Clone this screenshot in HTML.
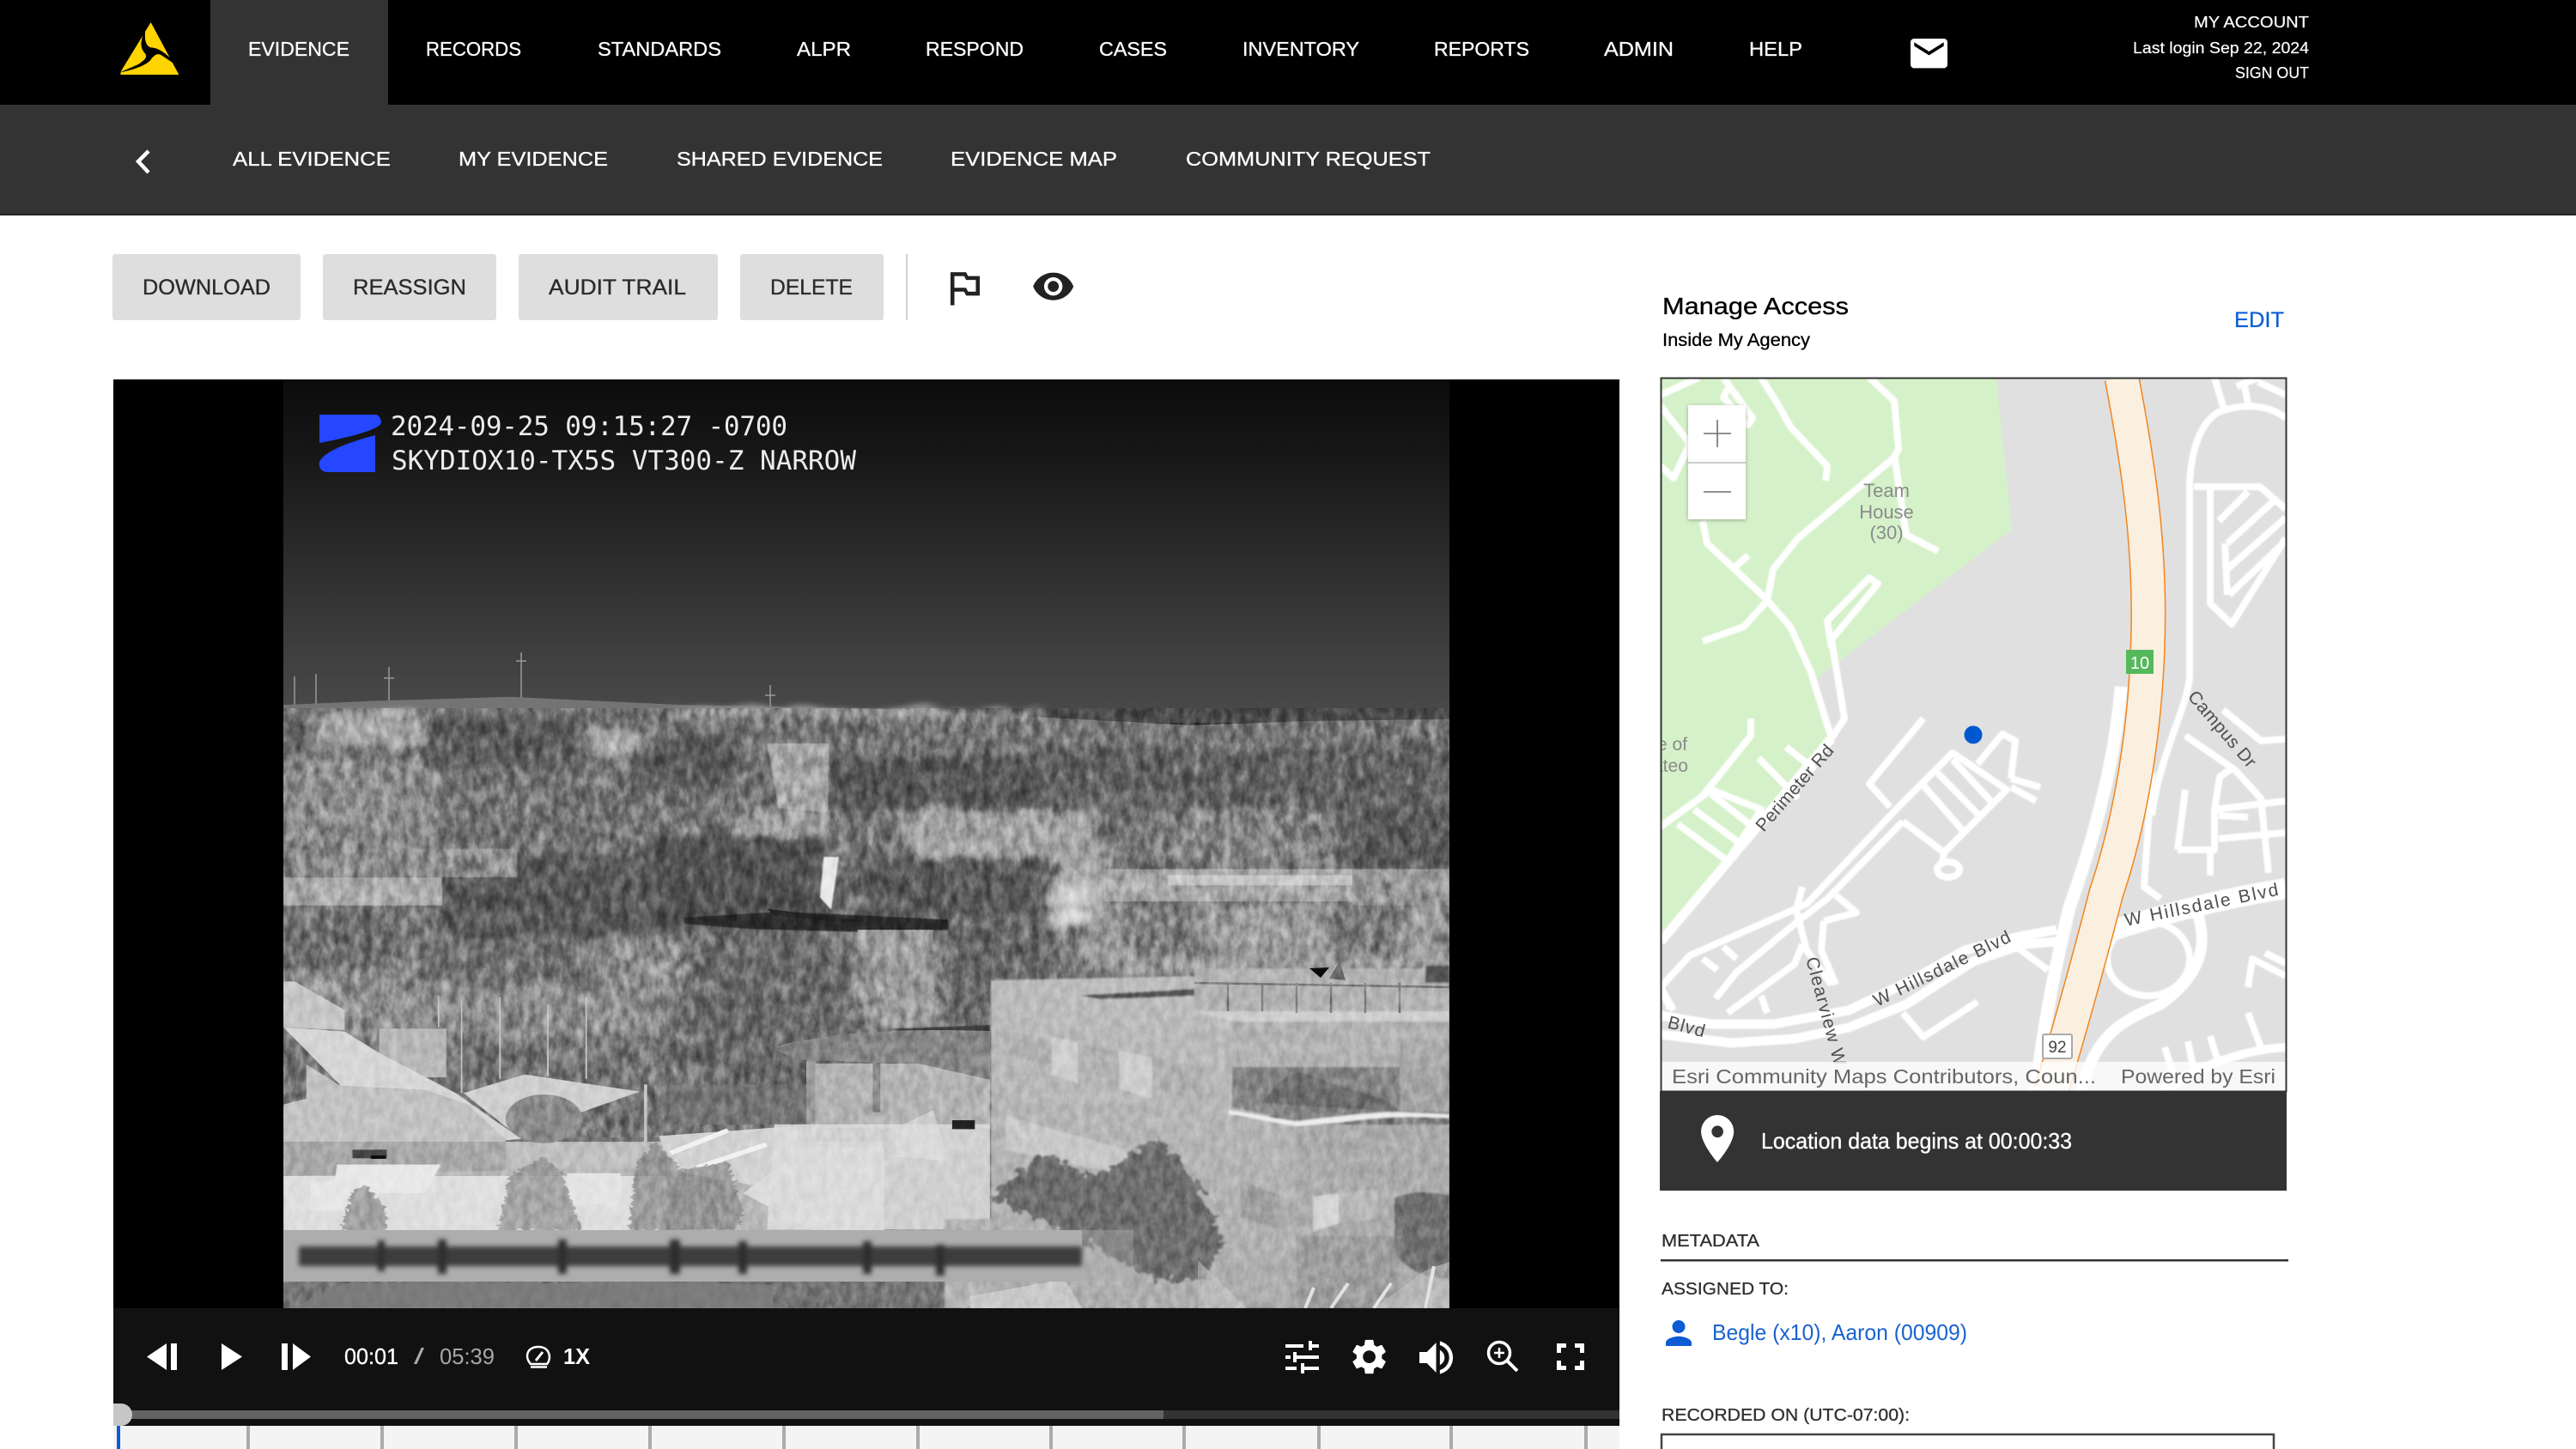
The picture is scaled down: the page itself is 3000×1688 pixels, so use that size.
<!DOCTYPE html>
<html lang="en">
<head>
<meta charset="utf-8">
<title>Evidence</title>
<style>
html,body{margin:0;padding:0;background:#fff;width:3000px;height:1688px;overflow:hidden}
svg{display:block}
text{font-family:"Liberation Sans",sans-serif}
.nav{font-size:23px;fill:#fff;stroke:#fff;stroke-width:.3}
.btn{font-size:25px;fill:#2b2b2b;stroke:#2b2b2b;stroke-width:.35}
.acc{font-size:18px;fill:#fff;stroke:#fff;stroke-width:.2}
.mono{font-family:"DejaVu Sans Mono","Liberation Mono",monospace;font-size:31px;fill:#ececec}
.r{fill:none;stroke:#fff;stroke-width:8;stroke-linejoin:round;stroke-linecap:butt}
.rw{fill:none;stroke:#fff;stroke-width:11;stroke-linejoin:round}
.lab{font-size:21px;fill:#4f4f4f}
.meta{font-size:20px;fill:#2f2f2f;stroke:#2f2f2f;stroke-width:.3}
</style>
</head>
<body>
<svg xmlns="http://www.w3.org/2000/svg" width="3000" height="1688" viewBox="0 0 3000 1688">
<defs>
<linearGradient id="sky" x1="0" y1="0" x2="0" y2="1">
<stop offset="0" stop-color="#0c0c0c"/><stop offset=".2" stop-color="#161616"/><stop offset=".5" stop-color="#2a2a2a"/><stop offset=".8" stop-color="#3f3f3f"/><stop offset="1" stop-color="#4b4b4b"/>
</linearGradient>
<linearGradient id="wall" x1="0" y1="0" x2="0" y2="1"><stop offset="0" stop-color="#bcbcbc"/><stop offset="1" stop-color="#adadad"/></linearGradient>
<filter id="j" x="-8%" y="-8%" width="116%" height="116%" color-interpolation-filters="sRGB">
<feTurbulence type="fractalNoise" baseFrequency=".03 .025" numOctaves="3" seed="4" result="t"/>
<feDisplacementMap in="SourceGraphic" in2="t" scale="50" xChannelSelector="R" yChannelSelector="G"/>
<feGaussianBlur stdDeviation="9 6"/>
</filter>
<filter id="jt" x="-10%" y="-10%" width="120%" height="120%" color-interpolation-filters="sRGB">
<feTurbulence type="fractalNoise" baseFrequency=".09" numOctaves="3" seed="12" result="t"/>
<feDisplacementMap in="SourceGraphic" in2="t" scale="26" xChannelSelector="R" yChannelSelector="G"/>
<feGaussianBlur stdDeviation="1"/>
</filter>
<filter id="b" x="-10%" y="-20%" width="120%" height="140%"><feGaussianBlur stdDeviation="3"/></filter>
<filter id="b1" x="-5%" y="-5%" width="110%" height="110%"><feGaussianBlur stdDeviation="1"/></filter>
<filter id="m" x="-2%" y="-2%" width="104%" height="104%"><feGaussianBlur stdDeviation=".7"/></filter>
<filter id="n" x="0" y="0" width="100%" height="100%" color-interpolation-filters="sRGB">
<feTurbulence type="fractalNoise" baseFrequency=".11 .07" numOctaves="3" seed="9"/>
<feColorMatrix type="matrix" values="1.7 0 0 0 -.35 1.7 0 0 0 -.35 1.7 0 0 0 -.35 0 0 0 0 1"/>
</filter>
<filter id="n2" x="0" y="0" width="100%" height="100%" color-interpolation-filters="sRGB">
<feTurbulence type="fractalNoise" baseFrequency=".09 .05" numOctaves="3" seed="3"/>
<feColorMatrix type="matrix" values="1.8 0 0 0 -.4 1.8 0 0 0 -.4 1.8 0 0 0 -.4 0 0 0 0 1"/>
</filter>
<clipPath id="vc"><rect x="330" y="442" width="1358" height="1082"/></clipPath>
<clipPath id="mc"><rect x="1935" y="441" width="727" height="830"/></clipPath>
</defs>

<rect width="3000" height="1688" fill="#fff"/>

<!-- top nav -->
<rect width="3000" height="122" fill="#000"/>
<rect x="245" width="207" height="122" fill="#333"/>
<rect y="122" width="3000" height="128" fill="#333"/>
<rect y="249" width="3000" height="2" fill="#222"/>

<!-- logo -->
<g transform="translate(125 15) scale(.3333)">
<path d="M152 33 L250 216 L45 216 L47 205 Z" fill="#ffd400"/>
<path d="M134 50 C118 92 110 118 132 142 C142 156 128 166 108 180 L42 209 C92 198 130 186 150 166 C164 146 176 138 192 150 L246 186 C216 150 186 126 160 122 C140 122 126 106 134 50 Z" fill="#000"/>
<path d="M40 216 H47 L44 205 Z" fill="#000"/>
</g>

<text class="nav" x="289" y="65" textLength="118" lengthAdjust="spacingAndGlyphs">EVIDENCE</text>
<text class="nav" x="496" y="65" textLength="111" lengthAdjust="spacingAndGlyphs">RECORDS</text>
<text class="nav" x="696" y="65" textLength="144" lengthAdjust="spacingAndGlyphs">STANDARDS</text>
<text class="nav" x="928" y="65" textLength="63" lengthAdjust="spacingAndGlyphs">ALPR</text>
<text class="nav" x="1078" y="65" textLength="114" lengthAdjust="spacingAndGlyphs">RESPOND</text>
<text class="nav" x="1280" y="65" textLength="79" lengthAdjust="spacingAndGlyphs">CASES</text>
<text class="nav" x="1447" y="65" textLength="136" lengthAdjust="spacingAndGlyphs">INVENTORY</text>
<text class="nav" x="1670" y="65" textLength="111" lengthAdjust="spacingAndGlyphs">REPORTS</text>
<text class="nav" x="1868" y="65" textLength="81" lengthAdjust="spacingAndGlyphs">ADMIN</text>
<text class="nav" x="2037" y="65" textLength="62" lengthAdjust="spacingAndGlyphs">HELP</text>

<path transform="translate(2220.7 36.4) scale(2.15)" fill="#fff" d="M20 4H4c-1.1 0-2 .9-2 2v12c0 1.1.9 2 2 2h16c1.1 0 2-.9 2-2V6c0-1.1-.9-2-2-2zm0 4l-8 5-8-5V6l8 5 8-5v2z"/>

<text class="acc" x="2555" y="32" textLength="134" lengthAdjust="spacingAndGlyphs">MY ACCOUNT</text>
<text class="acc" x="2484" y="62" textLength="205" lengthAdjust="spacingAndGlyphs">Last login Sep 22, 2024</text>
<text class="acc" x="2603" y="91" textLength="86" lengthAdjust="spacingAndGlyphs">SIGN OUT</text>

<!-- sub nav -->
<path d="M173 176 L161 188 L173 201" fill="none" stroke="#fff" stroke-width="4.5"/>
<text class="nav" x="271" y="193" textLength="184" lengthAdjust="spacingAndGlyphs">ALL EVIDENCE</text>
<text class="nav" x="534" y="193" textLength="174" lengthAdjust="spacingAndGlyphs">MY EVIDENCE</text>
<text class="nav" x="788" y="193" textLength="240" lengthAdjust="spacingAndGlyphs">SHARED EVIDENCE</text>
<text class="nav" x="1107" y="193" textLength="194" lengthAdjust="spacingAndGlyphs">EVIDENCE MAP</text>
<text class="nav" x="1381" y="193" textLength="285" lengthAdjust="spacingAndGlyphs">COMMUNITY REQUEST</text>

<!-- buttons -->
<rect x="131" y="296" width="219" height="77" rx="3" fill="#dedede"/>
<rect x="376" y="296" width="202" height="77" rx="3" fill="#dedede"/>
<rect x="604" y="296" width="232" height="77" rx="3" fill="#dedede"/>
<rect x="862" y="296" width="167" height="77" rx="3" fill="#dedede"/>
<text class="btn" x="166" y="343" textLength="149" lengthAdjust="spacingAndGlyphs">DOWNLOAD</text>
<text class="btn" x="411" y="343" textLength="132" lengthAdjust="spacingAndGlyphs">REASSIGN</text>
<text class="btn" x="639" y="343" textLength="160" lengthAdjust="spacingAndGlyphs">AUDIT TRAIL</text>
<text class="btn" x="897" y="343" textLength="96" lengthAdjust="spacingAndGlyphs">DELETE</text>
<rect x="1055" y="296" width="2" height="77" fill="#d0d0d0"/>
<path transform="translate(1095.6 308) scale(2.27)" fill="#222" d="M14 6l-1-2H5v17h2v-7h5l1 2h7V6h-6zm4 8h-4l-1-2H7V6h5l1 2h5v6z"/>
<path transform="translate(1201 308) scale(2.14)" fill="#222" d="M12 4.5C7 4.5 2.73 7.61 1 12c1.73 4.39 6 7.5 11 7.5s9.27-3.11 11-7.5c-1.73-4.39-6-7.5-11-7.5zM12 17c-2.76 0-5-2.24-5-5s2.24-5 5-5 5 2.24 5 5-2.24 5-5 5zm0-8c-1.66 0-3 1.34-3 3s1.34 3 3 3 3-1.34 3-3-1.34-3-3-3z"/>

<!-- video -->
<rect x="132" y="442" width="1754" height="1082" fill="#000"/>
<g clip-path="url(#vc)" style="isolation:isolate">
<rect x="330" y="442" width="1358" height="400" fill="url(#sky)"/>
<g stroke="#9a9a9a" stroke-width="1.5" fill="none">
<path d="M607 760V835M601 770H613M453 777V830M447 790H459M368 785V830M343 788V835M897 798V835M891 810H903"/>
</g>

<svg x="330" y="800" width="1358" height="724" viewBox="0 0 1543 1534" preserveAspectRatio="none">
<path d="M0 45 L120 35 L300 25 L530 45 L800 55 L1000 75 L1200 95 L1350 85 L1543 80 V1534 H0Z" fill="#747474"/>
<g filter="url(#j)">
<rect x="40" y="60" width="140" height="90" fill="#a4a4a4"/>
<rect x="390" y="110" width="100" height="60" fill="#aaa"/>
<rect x="520" y="50" width="480" height="30" fill="#8c8c8c"/>
<rect x="0" y="180" width="200" height="220" fill="#8b8b8b"/>
<rect x="600" y="300" width="130" height="120" fill="#9c9c9c"/>
<rect x="820" y="250" width="260" height="260" fill="#a2a2a2"/>
<rect x="1160" y="300" width="240" height="140" fill="#828282"/>
<rect x="190" y="70" width="210" height="130" fill="#5c5c5c"/>
<rect x="470" y="120" width="130" height="130" fill="#585858"/>
<rect x="720" y="170" width="290" height="130" fill="#565656"/>
<rect x="1000" y="150" width="543" height="150" fill="#626262"/>
<rect x="1400" y="300" width="143" height="150" fill="#5a5a5a"/>
<rect x="0" y="90" width="40" height="90" fill="#636363"/>
<rect x="210" y="410" width="260" height="210" fill="#595959"/>
<rect x="480" y="370" width="240" height="230" fill="#525252"/>
<rect x="760" y="420" width="250" height="160" fill="#595959"/>
<rect x="1020" y="480" width="60" height="110" fill="#cfcfcf"/>
</g>
<path d="M640 140 H722 L720 310 L655 300Z" fill="#b4b4b4" filter="url(#b1)" opacity=".75"/>
<rect x="0" y="470" width="210" height="70" fill="#aaa" filter="url(#b1)"/>
<path d="M10 400 H310 V470 H10Z" fill="#8a8a8a" filter="url(#b1)"/>
<path d="M715 420 L735 420 L725 550 L710 520Z" fill="#e8e8e8" filter="url(#b1)"/>
<rect x="1085" y="450" width="330" height="80" fill="#a6a6a6" filter="url(#b1)"/>
<rect x="1170" y="465" width="245" height="25" fill="#c8c8c8" filter="url(#b1)"/>
<rect x="1415" y="450" width="128" height="90" fill="#979797" filter="url(#b1)"/>
<g filter="url(#j)">
<rect x="0" y="620" width="530" height="240" fill="#8c8c8c"/>
<rect x="1060" y="540" width="483" height="170" fill="#9a9a9a"/>
<rect x="760" y="620" width="110" height="220" fill="#9a9a9a"/>
<ellipse cx="640" cy="800" rx="125" ry="215" fill="#6a6a6a"/>
<rect x="870" y="560" width="150" height="270" fill="#686868"/>
<rect x="0" y="560" width="160" height="140" fill="#6e6e6e"/>
<rect x="175" y="620" width="240" height="110" fill="#707070"/>
<rect x="1120" y="540" width="90" height="130" fill="#7c7c7c"/>
<rect x="1390" y="540" width="90" height="130" fill="#7a7a7a"/>
</g>
<path d="M530 570 L660 555 L880 575 L880 600 L760 605 L620 598 L530 585Z" fill="#2c2c2c" filter="url(#b1)"/>
<path d="M640 548 L770 578 L745 582 L650 565Z" fill="#222"/>
<rect x="760" y="600" width="100" height="50" fill="#9e9e9e"/>
</svg>
<!-- foliage texture -->
<rect x="330" y="825" width="1358" height="500" filter="url(#n2)" style="mix-blend-mode:overlay" opacity=".3"/>

<!-- lower-left detail -->
<svg x="330" y="1130" width="700" height="394" viewBox="0 0 1568 1182" preserveAspectRatio="none">
<g filter="url(#b1)">
<path d="M0 600 H1568 V910 H0Z" fill="#b8b8b8"/>
<path d="M0 40 L30 40 L160 140 L160 210 L0 200Z" fill="#c6c6c6"/>
<rect x="250" y="205" width="175" height="170" fill="#b8b8b8"/>
<path d="M0 200 L160 215 L250 290 L450 430 L620 590 L580 595 L480 470 L370 420 L150 405Z" fill="#d6d6d6"/>
<path d="M60 330 L150 405 L370 420 L480 470 L580 590 L580 690 L0 720 V470 L60 450Z" fill="#c2c2c2"/>
<path d="M0 600 H580 V700 L0 720Z" fill="#a8a8a8"/>
<path d="M470 430 L630 365 L930 425 L760 505 L620 590Z" fill="#cfcfcf"/>
<ellipse cx="680" cy="520" rx="100" ry="85" fill="#8a8a8a"/>
<rect x="590" y="605" width="360" height="90" fill="#bfbfbf"/>
<rect x="180" y="628" width="90" height="30" fill="#444"/>
<rect x="228" y="648" width="40" height="12" fill="#111"/>
<path d="M0 720 H1000 V910 H0Z" fill="#dedede"/>
<path d="M140 680 H410 L370 780 H130Z" fill="#e8e8e8"/>
<rect x="70" y="740" width="130" height="100" fill="#e6e6e6"/>
<rect x="450" y="720" width="110" height="100" fill="#e0e0e0"/>
<rect x="740" y="710" width="140" height="110" fill="#e4e4e4"/>
<path d="M980 580 L1340 545 L1350 680 L1260 760 L1010 700Z" fill="#d2d2d2"/>
<path d="M1010 640 L1160 560M1080 690 L1260 610" stroke="#f2f2f2" stroke-width="16"/>
<path d="M1200 780 L1360 620 H1568 V910 H1380Z" fill="#dcdcdc"/>
<rect x="1000" y="400" width="370" height="140" fill="#737373"/>
</g>
<g filter="url(#jt)" opacity=".72">
<path d="M150 910 L180 770 L215 750 L265 830 L270 910Z" fill="#8a8a8a"/>
<path d="M560 910 L590 720 L680 650 L730 720 L780 910Z" fill="#8f8f8f"/>
<path d="M900 910 L920 680 L970 600 L1040 700 L1160 670 L1200 850 L1180 910Z" fill="#868686"/>
</g>
<path d="M1285 270 C1340 235 1520 235 1568 240 V325 L1350 310 Z" fill="#9a9a9a"/>
<rect x="1365" y="310" width="24" height="270" fill="#8e8e8e"/>
<g stroke="#c4c4c4" stroke-width="4"><path d="M565 95V380M790 95V380M690 120V370M405 90V200M465 100V430"/></g>
<path d="M945 400V600" stroke="#c4c4c4" stroke-width="8"/>
</svg>

<svg x="330" y="800" width="1358" height="724" viewBox="0 0 1543 1534" preserveAspectRatio="none">
<path d="M800 845 L935 835 V885 L880 860Z" fill="#3d3d3d" filter="url(#b1)"/>
<path d="M700 930 H935 V1090 H700Z" fill="#c8c8c8" opacity=".75"/>
<path d="M650 895 C690 860 800 840 935 850 V970 L840 930 L680 920Z" fill="#858585"/>
<rect x="692" y="925" width="12" height="200" fill="#999"/><rect x="780" y="930" width="10" height="120" fill="#888"/>
<path d="M810 1090 L860 1045 L880 1170 L810 1160Z" fill="#cfcfcf"/>
<path d="M650 1080 H935 V1340 H640Z" fill="#dadada" opacity=".9"/>
<rect x="885" y="1070" width="30" height="22" fill="#222"/>
</svg>

<!-- main building (page coords) -->
<g filter="url(#b1)">
<rect x="1100" y="1420" width="130" height="104" fill="#b4b4b4"/>
<path d="M1154 1142 L1391 1137 V1128 L1688 1128 V1192 L1435 1192Z" fill="#bcbcbc"/>
<path d="M1250 1160 L1391 1152 V1160 L1280 1164Z" fill="#555"/>
<path d="M1391 1128 H1688 V1178 H1391Z" fill="#b2b2b2"/>
<rect x="1660" y="1125" width="28" height="20" fill="#555"/>
<path d="M1391 1178 H1688 V1190 H1435Z" fill="#cecece"/>
<path d="M1154 1142 L1435 1190 V1300 L1509 1310 V1524 H1154Z" fill="url(#wall)"/>
<path d="M1435 1190 H1688 V1300 H1435Z" fill="#b2b2b2"/>
<path d="M1435 1243 H1688 V1300 L1509 1305 L1435 1290Z" fill="#868686"/>
<path d="M1630 1210 H1688 V1295 H1630Z" fill="#aaa" opacity=".8"/>
<path d="M1470 1285 C1490 1255 1510 1245 1520 1250 C1560 1270 1620 1275 1630 1295Z" fill="#6c6c6c"/>
<path d="M1509 1310 H1688 V1524 H1509Z" fill="#ababab"/>
<path d="M1431 1293 L1509 1306 C1550 1302 1600 1294 1640 1296 L1688 1298 V1303 C1640 1300 1600 1302 1560 1308 L1509 1312 L1431 1298Z" fill="#ececec"/>
<path d="M1169 1200 L1402 1243 V1283 L1169 1228Z" fill="#b0b0b0"/>
<path d="M1225 1208 L1255 1214 V1262 L1225 1252ZM1303 1224 L1342 1232 V1280 L1303 1268Z" fill="#cecece"/>
<path d="M1171 1300 L1314 1340 V1370 L1171 1340Z" fill="#c8c8c8"/>
<path d="M1445 1375 L1490 1392 V1432 L1445 1418Z" fill="#a0a0a0"/>
<path d="M1529 1394 L1559 1390 V1425 L1529 1435Z" fill="#d4d4d4"/>
<path d="M1559 1390 L1605 1385 V1420 L1559 1425Z" fill="#b8b8b8"/>
<path d="M1624 1395 C1650 1385 1670 1390 1688 1392 V1490 C1660 1490 1640 1480 1624 1460Z" fill="#6f6f6f"/>
<rect x="1510" y="1440" width="120" height="84" fill="#929292" opacity=".55"/>
</g>
<path d="M1525 1128 L1548 1127 L1538 1139Z" fill="#0a0a0a"/>
<path d="M1548 1140 L1560 1120 L1567 1142Z" fill="#666"/>
<g stroke="#7c7c7c" stroke-width="2.5" fill="none"><path d="M1391 1145 L1688 1150M1430 1145V1178M1470 1145V1178M1510 1145V1180M1550 1145V1180M1590 1145V1180M1630 1145V1180"/></g>
<!-- tree -->
<g filter="url(#jt)"><path d="M1150 1395 L1215 1345 L1280 1370 L1349 1322 L1395 1380 L1425 1450 L1400 1493 L1340 1490 L1290 1460 L1210 1420 Z" fill="#6e6e6e"/></g>
<path d="M1395 1468 L1452 1524 H1600 L1660 1480 L1688 1470 V1524 H1395Z" fill="#c4c4c4" opacity=".55"/>
<g stroke="#e2e2e2" stroke-width="4" fill="none"><path d="M1520 1524L1530 1500M1550 1524L1570 1495M1600 1524L1620 1495M1660 1524L1670 1475"/></g>
<path d="M1130 1510 L1240 1490 L1260 1524 H1130Z" fill="#c8c8c8"/>

<rect x="330" y="825" width="1358" height="699" filter="url(#n)" style="mix-blend-mode:overlay" opacity=".2"/>

<!-- blurred text strip -->
<rect x="330" y="1433" width="930" height="60" fill="#adadad"/>
<rect x="1260" y="1433" width="60" height="60" fill="#b0b0b0" opacity=".4"/>
<g filter="url(#b)">
<rect x="348" y="1452" width="912" height="23" fill="#3c3c3c"/>
<path d="M440 1445h8v36h-8zM510 1444h10v40h-10zM650 1444h10v40h-10zM780 1444h12v40h-12zM860 1446h10v38h-10zM1005 1446h10v38h-10zM1090 1450h10v36h-10z" fill="#2e2e2e"/>
</g>
<path d="M340 1524 L400 1495 L520 1493 L640 1495 L760 1493 L900 1497 L900 1524Z" fill="#7e7e7e" opacity=".75"/>
</g>

<!-- OSD -->
<path d="M372 483 H437 C442 483 444 490 444 492 C444 500 405 510 372 516 Z" fill="#2447ff"/>
<path d="M437 507 V550 H382 C372 550 371 542 372 538 C378 525 410 514 437 507 Z" fill="#2447ff"/>
<text class="mono" x="455" y="507" textLength="462">2024-09-25 09:15:27 -0700</text>
<text class="mono" x="456" y="547" textLength="541">SKYDIOX10-TX5S VT300-Z NARROW</text>

<!-- controls -->
<rect x="132" y="1524" width="1754" height="137" fill="#111"/>
<rect x="132" y="1643" width="1223" height="10" fill="#636363"/>
<rect x="1355" y="1643" width="531" height="10" fill="#333"/>
<path d="M132 1635 H141 A13 13 0 0 1 141 1661 H132Z" fill="#c6c6c6"/>
<g fill="#fff">
<path d="M194 1565 V1596 L171 1580.5Z"/><rect x="199" y="1565" width="7" height="31"/>
<path d="M258 1565 L282 1580.5 L258 1596Z"/>
<rect x="328" y="1565" width="7" height="31"/><path d="M341 1565 L362 1580.5 L341 1596Z"/>
</g>
<text x="401" y="1589" font-size="26" fill="#fff" stroke="#fff" stroke-width=".3" textLength="63" lengthAdjust="spacingAndGlyphs">00:01</text>
<text x="482" y="1589" font-size="26" fill="#aaa" textLength="12" lengthAdjust="spacingAndGlyphs">/</text>
<text x="512" y="1589" font-size="26" fill="#a8a8a8" textLength="64" lengthAdjust="spacingAndGlyphs">05:39</text>
<g fill="none" stroke="#fff" stroke-width="2.5">
<path d="M618 1589 C611 1581 613 1570 626 1569 C640 1568 643 1582 637 1589Z"/>
<path d="M618 1592.5 H637"/>
<path d="M624 1585 L632 1575" stroke-width="3"/>
</g>
<text x="656" y="1589" font-size="26" font-weight="700" fill="#fff" textLength="31" lengthAdjust="spacingAndGlyphs">1X</text>

<g fill="#fff">
<rect x="1497" y="1566" width="21" height="4"/><rect x="1526" y="1566" width="10" height="4"/><rect x="1524" y="1562" width="4" height="11"/>
<rect x="1497" y="1579" width="6" height="4"/><rect x="1508" y="1579" width="28" height="4"/><rect x="1506" y="1575" width="4" height="12"/>
<rect x="1497" y="1592" width="13" height="4"/><rect x="1517" y="1592" width="19" height="4"/><rect x="1515" y="1588" width="4" height="12"/>
</g>
<path transform="translate(1570 1556) scale(2.05)" fill="#fff" d="M19.14 12.94c.04-.3.06-.61.06-.94 0-.32-.02-.64-.07-.94l2.03-1.58c.18-.14.23-.41.12-.61l-1.92-3.32c-.12-.22-.37-.29-.59-.22l-2.39.96c-.5-.38-1.03-.7-1.62-.94l-.36-2.54c-.04-.24-.24-.41-.48-.41h-3.84c-.24 0-.43.17-.47.41l-.36 2.54c-.59.24-1.13.57-1.62.94l-2.39-.96c-.22-.08-.47 0-.59.22L2.74 8.87c-.12.21-.08.47.12.61l2.03 1.58c-.05.3-.09.63-.09.94s.02.64.07.94l-2.03 1.58c-.18.14-.23.41-.12.61l1.92 3.32c.12.22.37.29.59.22l2.39-.96c.5.38 1.03.7 1.62.94l.36 2.54c.05.24.24.41.48.41h3.84c.24 0 .44-.17.47-.41l.36-2.54c.59-.24 1.13-.56 1.62-.94l2.39.96c.22.08.47 0 .59-.22l1.92-3.32c.12-.22.07-.47-.12-.61l-2.01-1.58zM12 15.6c-1.98 0-3.6-1.62-3.6-3.6s1.62-3.6 3.6-3.6 3.6 1.62 3.6 3.6-1.62 3.6-3.6 3.6z"/>
<path transform="translate(1646.5 1555.5) scale(2.17)" fill="#fff" d="M3 9v6h4l5 5V4L7 9H3zm13.5 3c0-1.77-1.02-3.29-2.5-4.03v8.05c1.48-.73 2.5-2.25 2.5-4.02zM14 3.23v2.06c2.89.86 5 3.54 5 6.71s-2.11 5.85-5 6.71v2.06c4.01-.91 7-4.49 7-8.77s-2.99-7.86-7-8.77z"/>
<g fill="none" stroke="#fff">
<circle cx="1746" cy="1576" r="12.5" stroke-width="3.5"/>
<path d="M1746 1570V1582M1740 1576H1752" stroke-width="2.5"/>
<path d="M1755 1585 L1767 1597" stroke-width="4"/>
<path d="M1815.5 1576V1567.5H1824M1834 1567.5H1842.5V1576M1842.5 1585V1593.5H1834M1824 1593.5H1815.5V1585" stroke-width="5"/>
</g>

<!-- timeline -->
<rect x="132" y="1661" width="1754" height="27" fill="#f4f4f4"/>
<g fill="#ababab">
<rect x="287" y="1661" width="4" height="27"/><rect x="443" y="1661" width="4" height="27"/><rect x="599" y="1661" width="4" height="27"/><rect x="755" y="1661" width="4" height="27"/><rect x="911" y="1661" width="4" height="27"/><rect x="1067" y="1661" width="4" height="27"/><rect x="1222" y="1661" width="4" height="27"/><rect x="1377" y="1661" width="4" height="27"/><rect x="1534" y="1661" width="4" height="27"/><rect x="1688" y="1661" width="4" height="27"/><rect x="1845" y="1661" width="4" height="27"/>
</g>
<rect x="136" y="1661" width="4" height="27" fill="#0b5cd5"/>

<!-- manage access -->
<text x="1936" y="366" font-size="28" fill="#000" stroke="#000" stroke-width=".35" textLength="217" lengthAdjust="spacingAndGlyphs">Manage Access</text>
<text x="1936" y="403" font-size="21" fill="#000" stroke="#000" stroke-width=".3" textLength="172" lengthAdjust="spacingAndGlyphs">Inside My Agency</text>
<text x="2602" y="381" font-size="25" fill="#0b5cd5" stroke="#0b5cd5" stroke-width=".3" textLength="58" lengthAdjust="spacingAndGlyphs">EDIT</text>

<!-- map -->
<g clip-path="url(#mc)">
<rect x="1934" y="440" width="730" height="832" fill="#e0e0e0"/>
<path d="M1934 440 H2325 L2343 617 L2116 790 L2133 860 L1934 1097Z" fill="#d5f1c9"/>
<g filter="url(#m)">
<polyline class="r" points="2177,440 2206,467 2211,523 2206,533 2094,627 2065,663 2058,700"/>
<polyline class="r" points="1983,607 1988,633 2056,697 2085,730 2109,783 2133,860"/>
<polyline class="r" points="1983,747 2031,730 2058,700"/>
<polyline class="r" points="2133,755 2128,723 2177,673 2187,680 2133,745"/>
<polyline class="r" points="2133,745 2148,837 2133,860"/>
<polyline class="r" points="2206,530 2220,623 2257,642"/>
<polyline class="r" points="2051,440 2070,470 2085,497 2128,543 2126,560"/>
<polyline class="r" points="2007,440 2041,487 2036,495 2007,463 2012,453"/>
<polyline class="r" points="1934,473 1968,517 1949,557 1934,543"/>
<polyline class="r" points="1934,460 1978,440"/>
<polyline class="r" points="2036,647 2019,662"/>
<polyline class="rw" points="2133,860 1934,1097"/>
<polyline class="r" points="2039,837 2039,857 1983,927"/>
<polyline class="r" points="1934,963 1993,920 2051,943 2012,1003"/>
<polyline class="r" points="1954,960 2012,1003"/>
<polyline class="r" points="1973,943 2027,983"/>
<polyline class="r" points="1993,925 2041,963"/>
<polyline class="r" points="2048,883 2094,930"/>
<polyline class="r" points="2080,870 2114,897"/>
<polyline class="r" points="2240,837 2177,913 2201,940"/>
<polyline class="r" points="2211,940 2104,1053 1968,1113 1934,1150 1945,1175"/>
<polyline class="r" points="2216,957 2128,1047 2094,1073 2022,1133 1998,1163"/>
<polyline class="r" points="2216,957 2264,993"/>
<ellipse cx="2269" cy="1013" rx="13" ry="9" class="r"/>
<polyline class="r" points="2264,993 2262,1005"/>
<polyline class="r" points="2211,940 2274,877 2337,920 2264,993"/>
<polyline class="r" points="2240,915 2288,970"/>
<polyline class="r" points="2256,900 2308,953"/>
<polyline class="r" points="2274,885 2322,937"/>
<polyline class="r" points="2303,890 2332,855 2347,863 2342,907"/>
<polyline class="r" points="2342,907 2376,917"/>
<polyline class="r" points="2342,917 2371,933"/>
<polyline class="rw" points="1934,1183 1993,1193 2065,1193 2153,1177 2230,1140 2288,1107 2356,1090 2395,1083"/>
<polyline class="rw" points="1934,1205 2017,1215 2090,1210 2153,1197 2220,1170 2298,1120 2356,1100 2395,1097"/>
<path d="M2463 1083 C2520 1065 2580 1048 2662 1035" fill="none" stroke="#fff" stroke-width="24"/>
<path d="M2470 800 C2465 870 2445 960 2410 1057 C2395 1120 2380 1190 2371 1271" fill="none" stroke="#fff" stroke-width="15"/>
<polyline class="r" points="2506,900 2497,1033 2516,1047"/>
<ellipse cx="2502" cy="1117" rx="48" ry="43" class="r"/>
<path d="M2560 1067 C2570 1100 2565 1135 2516 1170 C2470 1190 2440 1205 2424 1271" fill="none" stroke="#fff" stroke-width="13"/>
<polyline class="r" points="2579,440 2591,480"/>
<path d="M2662 487 C2640 470 2610 470 2584 480 C2565 490 2552 520 2550 563 L2550 790 C2545 830 2515 880 2506 950" class="r" stroke-width="9"/>
<polyline class="r" points="2555,567 2632,567 2662,593"/>
<polyline class="r" points="2574,567 2574,703 2599,727 2662,627"/>
<polyline class="r" points="2584,607 2618,573"/>
<polyline class="r" points="2594,633 2652,580"/>
<polyline class="r" points="2594,663 2662,603"/>
<polyline class="r" points="2596,693 2662,630"/>
<polyline class="r" points="2591,633 2594,693"/>
<polyline class="r" points="2613,445 2618,470"/>
<polyline class="r" points="2605,450 2630,440"/>
<polyline class="r" points="2630,445 2662,460"/>
<polyline class="r" points="2536,990 2579,990 2579,943 2662,933"/>
<polyline class="r" points="2584,950 2618,952"/>
<polyline class="r" points="2584,977 2662,970"/>
<polyline class="r" points="2536,990 2545,920"/>
<polyline class="r" points="2589,827 2633,863 2662,861"/>
<polyline class="r" points="2545,857 2603,897 2633,930 2642,1017"/>
<polyline class="r" points="2574,1020 2574,990"/>
<polyline class="r" points="2579,943 2585,905 2600,895"/>
<polyline class="r" points="2618,1150 2623,1117 2662,1137"/>
<polyline class="r" points="2638,1110 2662,1122"/>
<polyline class="r" points="2618,1180 2633,1220"/>
<path d="M2662 1220 C2620 1222 2560 1240 2516 1271" fill="none" stroke="#fff" stroke-width="10"/>
<polyline class="r" points="2521,1220 2536,1267"/>
<polyline class="r" points="2548,1213 2555,1247"/>
<polyline class="r" points="2574,1207 2584,1240"/>
<polyline class="r" points="2216,1180 2240,1208 2303,1167"/>
<polyline class="r" points="1934,1150 1949,1177"/>
<polyline class="r" points="1983,1117 2000,1130"/>
<polyline class="r" points="2007,1103 2022,1117"/>
<polyline class="r" points="2051,1160 2058,1180"/>
<polyline class="r" points="2012,1180 2090,1123 2099,1100"/>
<polyline class="r" points="2099,1033 2092,1060 2104,1107 2133,1147"/>
<polyline class="r" points="2124,1073 2162,1063 2138,1043"/>
<polyline class="r" points="2124,1073 2121,1107 2138,1147"/>
<polyline class="r" points="2340,1097 2385,1130"/>
</g>
<path d="M2471 440 C2490 540 2506 640 2501 760 C2497 860 2480 960 2453 1040 C2430 1130 2410 1200 2389 1271" fill="none" stroke="#f2841e" stroke-width="41"/>
<path d="M2471 440 C2490 540 2506 640 2501 760 C2497 860 2480 960 2453 1040 C2430 1130 2410 1200 2389 1271" fill="none" stroke="#fbf0e0" stroke-width="38"/>

<rect x="2476" y="757" width="32" height="28" fill="#55b95c"/>
<text x="2492" y="779" font-size="20" fill="#fff" text-anchor="middle">10</text>
<rect x="2379" y="1205" width="34" height="28" fill="#fff" stroke="#aaa" stroke-width="2" rx="2"/>
<text x="2396" y="1226" font-size="19" fill="#444" text-anchor="middle">92</text>

<circle cx="2298" cy="856" r="10.5" fill="#0058cf"/>

<text x="2197" y="579" font-size="22" fill="#8b8b8b" text-anchor="middle">Team</text>
<text x="2197" y="604" font-size="22" fill="#8b8b8b" text-anchor="middle">House</text>
<text x="2197" y="628" font-size="22" fill="#8b8b8b" text-anchor="middle">(30)</text>
<text x="1930" y="874" font-size="21" fill="#8b8b8b">e of</text>
<text x="1925" y="899" font-size="21" fill="#8b8b8b">ateo</text>

<text class="lab" transform="translate(2054 970) rotate(-49)" textLength="126">Perimeter Rd</text>
<text class="lab" transform="translate(2547 812) rotate(49.5)" textLength="110">Campus Dr</text>
<text class="lab" transform="translate(2103 1117) rotate(75)" textLength="130">Clearview W</text>
<text class="lab" transform="translate(2186 1173) rotate(-26)" textLength="175">W Hillsdale Blvd</text>
<text class="lab" transform="translate(2476 1079) rotate(-11.5)" textLength="182">W Hillsdale Blvd</text>
<text class="lab" transform="translate(1941 1197) rotate(15)" textLength="44">Blvd</text>

<rect x="1935" y="1237" width="727" height="34" fill="#fff" fill-opacity=".78"/>
<text x="1947" y="1262" font-size="23" fill="#666" textLength="494" lengthAdjust="spacingAndGlyphs">Esri Community Maps Contributors, Coun...</text>
<text x="2470" y="1262" font-size="23" fill="#666" textLength="180" lengthAdjust="spacingAndGlyphs">Powered by Esri</text>

<rect x="1966" y="472" width="67" height="133" fill="#fff" style="filter:drop-shadow(0 1px 2px rgba(0,0,0,.3))"/>
<rect x="1966" y="538" width="67" height="2" fill="#ccc"/>
<path d="M2000 489V521M1984 505H2016M1984 573H2016" stroke="#6e6e6e" stroke-width="1.6" fill="none"/>
</g>
<rect x="1934.5" y="440.5" width="728" height="831" fill="none" stroke="#333" stroke-width="2"/>

<rect x="1933" y="1271" width="730" height="116" fill="#333"/>
<path transform="translate(1967.5 1293.5) scale(2.72 2.75)" fill="#fff" d="M12 2C8.13 2 5 5.13 5 9c0 5.25 7 13 7 13s7-7.75 7-13c0-3.87-3.13-7-7-7zm0 9.5c-1.38 0-2.5-1.12-2.5-2.5s1.12-2.5 2.5-2.5 2.5 1.12 2.5 2.5-1.12 2.5-2.5 2.5z"/>
<text x="2051" y="1338" font-size="26" fill="#fff" stroke="#fff" stroke-width=".35" textLength="362" lengthAdjust="spacingAndGlyphs">Location data begins at 00:00:33</text>

<!-- metadata -->
<text class="meta" x="1935" y="1452" textLength="114" lengthAdjust="spacingAndGlyphs">METADATA</text>
<rect x="1934" y="1467" width="731" height="2.5" fill="#333"/>
<text class="meta" x="1935" y="1508" textLength="148" lengthAdjust="spacingAndGlyphs">ASSIGNED TO:</text>
<path transform="translate(1932.5 1530.5) scale(1.875)" fill="#0b5cd5" d="M12 12c2.21 0 4-1.79 4-4s-1.79-4-4-4-4 1.79-4 4 1.79 4 4 4zm0 2c-2.67 0-8 1.34-8 4v2h16v-2c0-2.66-5.33-4-8-4z"/>
<text x="1994" y="1561" font-size="26" fill="#1a62cf" textLength="297" lengthAdjust="spacingAndGlyphs">Begle (x10), Aaron (00909)</text>
<text class="meta" x="1935" y="1655" textLength="289" lengthAdjust="spacingAndGlyphs">RECORDED ON (UTC-07:00):</text>
<path d="M1935 1690 V1671 H2648 V1690" fill="none" stroke="#444" stroke-width="2.5"/>
</svg>
</body>
</html>
